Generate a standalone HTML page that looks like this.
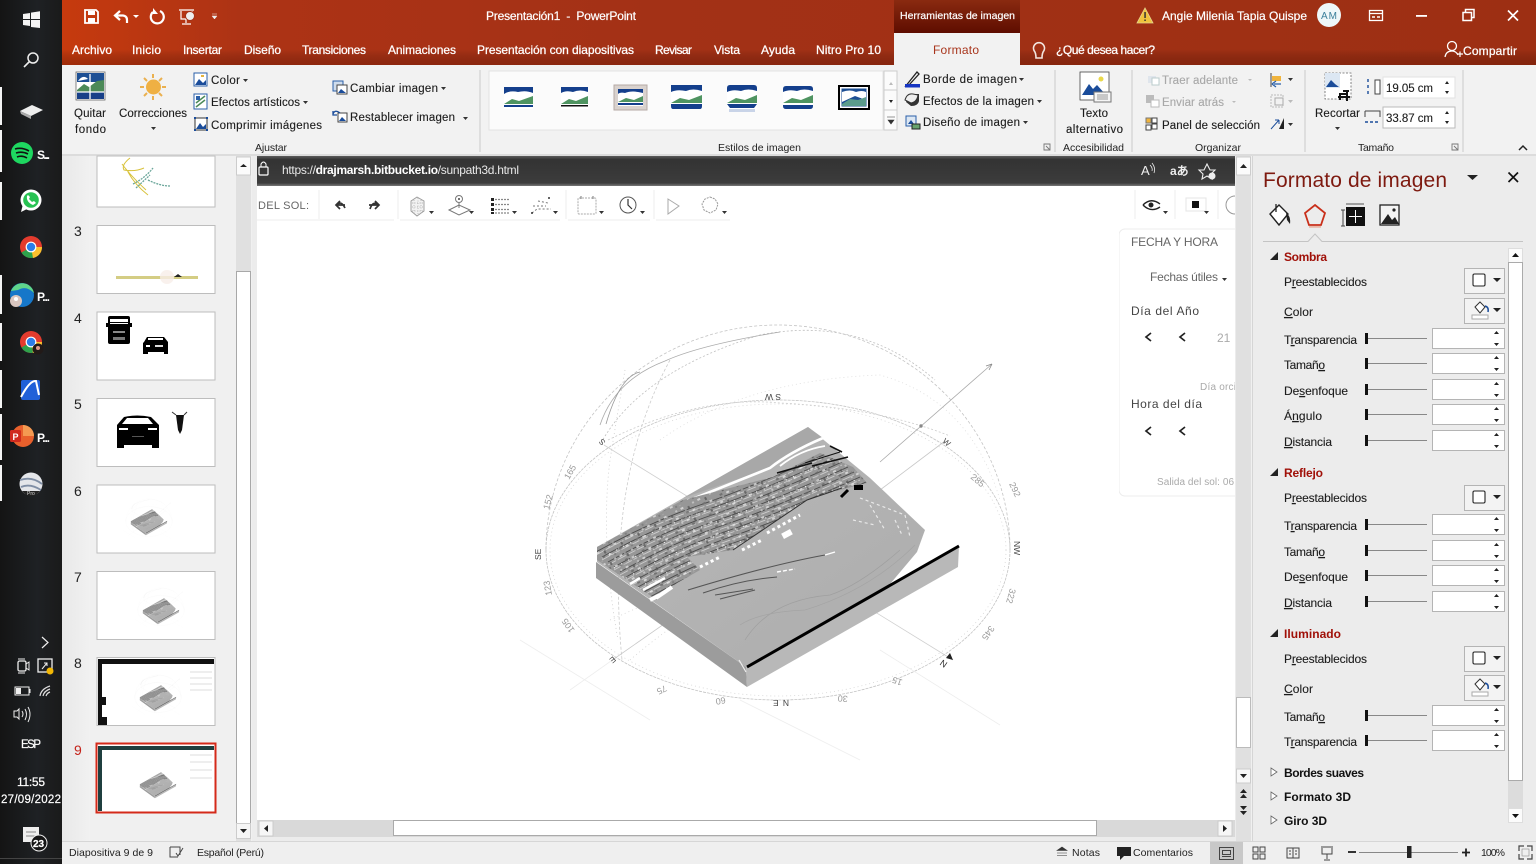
<!DOCTYPE html>
<html lang="es"><head><meta charset="utf-8"><title>Presentación1 - PowerPoint</title>
<style>
html,body{margin:0;padding:0;background:#f0f0f0;width:1536px;height:864px;overflow:hidden}
svg{display:block;position:absolute;left:0;top:0}
text{font-family:"Liberation Sans",sans-serif;font-size:12px;fill:#222;white-space:pre}
.w{fill:#fff;stroke:#fff;stroke-width:.2}.tab{fill:#fff;font-size:12px;stroke:#fff;stroke-width:.25}
.s{font-size:11.5px;fill:#1c1c1c;stroke:#1c1c1c;stroke-width:.12}
.g{font-size:10.5px;fill:#222}
.d{fill:#a8a8a8;stroke:#a8a8a8}
.n{font-size:14px;fill:#222}
.b{font-size:12px;fill:#a01008;font-weight:bold}
.bk{font-size:12px;fill:#111;font-weight:bold}
.p{font-size:12px;fill:#1c1c1c;stroke:#1c1c1c;stroke-width:.1}
.st{font-size:10.5px;fill:#222}
.t{font-size:12px;fill:#fff;font-weight:bold}
.c{font-size:9px;fill:#999}
.ln{stroke:#c9c9c9;stroke-width:1}
</style></head><body>
<svg width="1536" height="864" viewBox="0 0 1536 864" xmlns="http://www.w3.org/2000/svg">
<defs>
<linearGradient id="tb" x1="0" x2="1" y1="0" y2="0"><stop offset="0" stop-color="#c63a0e"/><stop offset=".12" stop-color="#ad3315"/><stop offset=".4" stop-color="#a33116"/><stop offset="1" stop-color="#9d2f13"/></linearGradient>
<linearGradient id="tbs" x1="0" x2="0" y1="0" y2="1"><stop offset=".75" stop-color="#000" stop-opacity="0"/><stop offset="1" stop-color="#5a1000" stop-opacity=".35"/></linearGradient>
<linearGradient id="ht" x1="0" x2="0" y1="0" y2="1"><stop offset="0" stop-color="#8a2a10"/><stop offset="1" stop-color="#5e0d00"/></linearGradient>
<linearGradient id="task" x1="0" x2="1" y1="0" y2="0"><stop offset="0" stop-color="#141414"/><stop offset=".6" stop-color="#1e2124"/><stop offset="1" stop-color="#1a1a1a"/></linearGradient>
<linearGradient id="bar" x1="0" x2="0" y1="0" y2="1"><stop offset="0" stop-color="#5c5c5c"/><stop offset=".12" stop-color="#333"/><stop offset=".9" stop-color="#3c3c3c"/><stop offset="1" stop-color="#777"/></linearGradient>
<linearGradient id="top" x1="0" x2="1" y1="0" y2="1"><stop offset="0" stop-color="#b8b8b8"/><stop offset="1" stop-color="#adadad"/></linearGradient>
<linearGradient id="shade" x1="0" x2="1" y1="0" y2="0"><stop offset="0" stop-color="#ddd"/><stop offset="1" stop-color="#f2f2f2"/></linearGradient>
<pattern id="speck" width="19" height="13" patternUnits="userSpaceOnUse" patternTransform="rotate(-28)">
<rect x="1" y="1" width="3" height="2" fill="#e4e4e4"/><rect x="8" y="3" width="2" height="3" fill="#555"/><rect x="14" y="1" width="2" height="2" fill="#cfcfcf"/><rect x="4" y="7" width="3" height="2" fill="#666"/><rect x="11" y="8" width="3" height="2" fill="#e8e8e8"/><rect x="16" y="10" width="2" height="2" fill="#777"/><rect x="1" y="11" width="2" height="1" fill="#aaa"/>
</pattern>
<clipPath id="urbclip"><polygon points="597,547 683,500 773,477 820,453 853,467 867,483 840,490 807,500 733,550 687,557 700,570 677,583 657,600 597,560"/></clipPath>
<clipPath id="slideclip"><rect x="257" y="186" width="978" height="634"/></clipPath>
<clipPath id="panelclip"><rect x="1119" y="225" width="116" height="275"/></clipPath>

<path id="stripe" d="M596 552 Q650 522 700 505 T830 452" fill="none" stroke="#4a4a4a" stroke-width=".9" stroke-dasharray="18 2"/>
<path id="stripe2" d="M596 555 Q650 525 700 508 T830 455" fill="none" stroke="#cdcdcd" stroke-width=".9" stroke-dasharray="9 2"/>
<path id="stripe3" d="M596 553 Q650 523 700 506 T830 453" fill="none" stroke="#eee" stroke-width="1.4" stroke-dasharray="1 7"/>

<g id="land">
<polygon points="596,562 746,667 747,687 596,578" fill="#9c9c9c"/>
<polygon points="746,667 959,546 958,567 747,687" fill="#b8b8b8"/>
<polygon points="597,547 808,427 870,478 925,530 917,552 885,590 746,667 597,562" fill="url(#top)"/>
<polygon points="808,427 823,438 787,457 770,468 683,498" fill="#a8a8a8"/>
<path d="M823 438 Q790 452 770 468 L690 500" fill="none" stroke="#fff" stroke-width="2.6"/>
<path d="M825 446 Q800 450 780 466" fill="none" stroke="#fff" stroke-width="1.800"/>
<polygon points="597,547 683,500 773,477 820,453 853,467 867,483 840,490 807,500 733,550 687,557 700,570 677,583 657,600 597,560" fill="#979797"/>
<g clip-path="url(#urbclip)">
<use href="#stripe"/><use href="#stripe2"/><use href="#stripe" transform="translate(6 5)"/><use href="#stripe2" transform="translate(6 5)"/><use href="#stripe3" transform="translate(6 5)"/>
<use href="#stripe" transform="translate(12 10)"/><use href="#stripe2" transform="translate(12 10)"/><use href="#stripe" transform="translate(18 15)"/><use href="#stripe2" transform="translate(18 15)"/><use href="#stripe3" transform="translate(18 15)"/>
<use href="#stripe" transform="translate(24 20)"/><use href="#stripe2" transform="translate(24 20)"/><use href="#stripe" transform="translate(30 25)"/><use href="#stripe2" transform="translate(30 25)"/><use href="#stripe3" transform="translate(30 25)"/>
<use href="#stripe" transform="translate(36 30)"/><use href="#stripe2" transform="translate(36 30)"/><use href="#stripe" transform="translate(42 35)"/><use href="#stripe2" transform="translate(42 35)"/><use href="#stripe3" transform="translate(42 35)"/>
<use href="#stripe" transform="translate(48 40)"/><use href="#stripe2" transform="translate(48 40)"/><use href="#stripe" transform="translate(54 45)"/><use href="#stripe2" transform="translate(54 45)"/>
<use href="#stripe" transform="translate(60 50)"/><use href="#stripe2" transform="translate(60 50)"/><use href="#stripe3" transform="translate(60 50)"/><use href="#stripe" transform="translate(66 55)"/><use href="#stripe" transform="translate(72 60)"/>
<rect x="590" y="440" width="290" height="170" fill="url(#speck)" opacity=".75"/>
</g>
<path d="M733 550 L807 500 L842 488" fill="none" stroke="#333" stroke-width="1"/>
<path d="M777 473 L812 463 M812 466 L848 457 M830 446 L842 452" fill="none" stroke="#111" stroke-width="1.600"/>
<path d="M805 463 L840 452" fill="none" stroke="#111" stroke-width="1"/>
<rect x="854" y="485" width="9" height="5" fill="#000"/>
<path d="M841 497 L848 490" stroke="#000" stroke-width="3"/>
<path d="M688 590 Q770 565 825 555" fill="none" stroke="#555" stroke-width="1.100"/><path d="M825 555 L835 552" stroke="#fff" stroke-width="1.400"/>
<path d="M703 593 Q740 580 777 577" fill="none" stroke="#555" stroke-width="1.100"/><path d="M777 572 L795 569" stroke="#fff" stroke-width="1.400" stroke-dasharray="4 2"/>
<path d="M715 595 L753 589 M720 599 L755 590" stroke="#555" stroke-width="1.100"/>
<path d="M700 567 L720 557 M742 550 L762 540 M767 533 L800 515" stroke="#fff" stroke-width="3" stroke-dasharray="3 3"/>
<rect x="782" y="531" width="10" height="6" fill="#fff" transform="rotate(-28 787 534)"/>
<path d="M656 598 L672 587 M650 600 L660 595" stroke="#fff" stroke-width="4"/><path d="M643 590 L665 578 M630 584 L640 578" stroke="#fff" stroke-width="2.500"/>
<path d="M860 498 L905 515 M905 515 L910 537 M853 520 L875 525 M870 505 L885 530 M895 520 L902 535" stroke="#e8e8e8" stroke-width="1.200" stroke-dasharray="3 3" fill="none"/>
<path d="M745 640 Q770 600 830 595 Q860 585 900 550" fill="none" stroke="#9f9f9f" stroke-width=".7"/>
<path d="M740 625 Q760 612 805 610 Q870 590 915 545" fill="none" stroke="#a4a4a4" stroke-width=".7"/>
<path d="M739 660 L746 672" stroke="#eee" stroke-width="1.200"/>
<path d="M747 667 L959 546" stroke="#000" stroke-width="3"/>
</g>

<g id="dome" fill="none" stroke="#c4c4c4" stroke-width=".8">
<ellipse cx="778" cy="550" rx="232" ry="150" stroke-dasharray="3 1"/>
<path d="M546 550 A232 225 0 0 1 1010 550" stroke-dasharray="3 2"/>
<ellipse cx="778" cy="550" rx="228" ry="146" stroke="#d5d5d5" stroke-dasharray="1 3"/>
<path d="M601 443 Q640 372 760 335 Q860 315 935 380" stroke="#c0c0c0" stroke-dasharray="2 2"/>
<path d="M608 440 Q700 395 780 403 Q880 408 950 436" stroke="#ccc" stroke-dasharray="2 2"/>
<path d="M600 425 Q615 380 665 361 Q700 345 780 332" stroke="#aaa"/>
<path d="M606 424 Q620 376 640 372" stroke="#999"/>
<path d="M625 370 Q618 410 610 460 Q600 540 618 640" stroke="#ccc" stroke-dasharray="1 3"/>
<path d="M670 360 Q605 480 622 660" stroke="#ccc" stroke-dasharray="3 2"/>
<path d="M604 445 L953 660" stroke="#d0d0d0"/>
<path d="M611 661 L720 585 M880 490 L945 441" stroke="#c8c8c8"/>
<path d="M880 462 L992 364" stroke="#a8a8a8"/>
<path d="M992 364 L986 366 M992 364 L989 370" stroke="#888"/>
<circle cx="921" cy="426" r="1.700" fill="#888" stroke="none"/>
<path d="M660 440 Q745 380 880 375 Q970 400 1000 500" stroke="#ddd" stroke-dasharray="1 3"/>
<path d="M610 620 Q680 590 700 570 M630 660 Q700 600 720 610" stroke="#d5d5d5" stroke-dasharray="1 3"/>
<path d="M520 640 L650 720 M880 650 L1000 725 M611 661 L570 690 M740 700 L860 760" stroke="#eee"/>
</g>
</defs>

<!-- desktop taskbar -->
<rect x="0" y="0" width="62" height="864" fill="url(#task)"/>
<g fill="#f4f4f4">
<rect x="0" y="87" width="2" height="38"/><rect x="0" y="130" width="2" height="42"/><rect x="0" y="182" width="2" height="38"/><rect x="0" y="275" width="2" height="39"/><rect x="0" y="323" width="2" height="38"/><rect x="0" y="370" width="2" height="38"/><rect x="0" y="414" width="2" height="46"/><rect x="0" y="465" width="2" height="36"/>
<path d="M23 14 L30 13 V19 H23 Z M31 12.600 L40 11.300 V19 H31 Z M23 20 H30 V26 L23 25 Z M31 20 H40 V28 L31 27 Z"/>
</g>
<circle cx="33" cy="58" r="5" fill="none" stroke="#eee" stroke-width="1.500"/><path d="M29 62 L24 67" stroke="#eee" stroke-width="1.600"/>
<path d="M20 111 L32 105 L43 110 L31 116 Z" fill="#eee"/><path d="M20 111 L31 116 V119 L21 114Z" fill="#aaa"/>
<circle cx="22" cy="153" r="11" fill="#1ed760"/><path d="M15 149 Q22 147 29 151 M16 153 Q22 151 28 154 M17 157 Q22 155 27 158" stroke="#111" stroke-width="1.600" fill="none"/>
<text x="37" y="159" class="t" textLength="13">S...</text>
<circle cx="31" cy="200" r="10.500" fill="#fff"/><path d="M21 212 L23 204 L27 209Z" fill="#fff"/><circle cx="31" cy="200" r="7.800" fill="#28c253"/><path d="M27 196 Q26 202 33 205 L36 203 L34 201 L32 202 Q30 200 29 199 L30 197 L28 195Z" fill="#fff"/>
<g id="chrome"><circle cx="31" cy="247" r="11" fill="#e33b2e"/><path d="M31 247 L21.500 252.500 A11 11 0 0 0 31 258 A11 11 0 0 0 40 253Z" fill="#2ea24c"/><path d="M31 247 L42 247 A11 11 0 0 1 33 258 Z" fill="#fbc02d"/><circle cx="31" cy="247" r="5.400" fill="#fff"/><circle cx="31" cy="247" r="4.200" fill="#2b7de9"/></g>
<circle cx="22" cy="295" r="12" fill="#1677c9"/><path d="M11 291 A12 12 0 0 1 34 293 Q26 285 18 290Z" fill="#5fd58a"/><circle cx="16" cy="301" r="6" fill="#d9c6c0"/><circle cx="16" cy="299" r="2" fill="#fff"/>
<text x="37" y="301" class="t" textLength="13">P...</text>
<use href="#chrome" y="95"/><circle cx="38" cy="349" r="5.500" fill="#221a18"/><circle cx="38" cy="348" r="2" fill="#d98"/>
<rect x="21" y="380" width="19" height="20" rx="2" fill="#2060d8"/><path d="M21 397 Q30 380 36 381 L39 395" fill="none" stroke="#fff" stroke-width="2"/>
<circle cx="23" cy="436" r="11" fill="#e8602c"/><path d="M23 425 A11 11 0 0 1 34 436 H23Z" fill="#f49a52"/><rect x="10" y="430" width="11" height="12" rx="1.500" fill="#d02a1e"/><text x="12.500" y="440" style="font-size:9px;font-weight:bold;fill:#fff">P</text>
<text x="37" y="442" class="t" textLength="13">P...</text>
<circle cx="31" cy="484" r="11.500" fill="#e4e6ea"/><path d="M20 480 Q32 476 42 484 M21 487 Q30 483 41 490" stroke="#7f8ea5" stroke-width="1.800" fill="none"/><path d="M22 491 H40 Q36 496 31 496 Q26 496 22 491Z" fill="#232323"/><text x="27" y="495" style="font-size:5px;fill:#ddd">Pro</text>
<path d="M42 637 L48 642.500 L42 648" fill="none" stroke="#eee" stroke-width="1.200"/>
<rect x="18" y="661" width="8" height="10" rx="1.500" fill="none" stroke="#eee" stroke-width="1.300"/><path d="M26 664 L29 662 V670 L26 668 M18 659 H25 M18 673 H25" fill="none" stroke="#eee"/>
<rect x="38" y="659" width="14" height="13" fill="none" stroke="#eee" stroke-width="1.300"/><path d="M42 669 L47 663 M44 663 H47 V666" fill="none" stroke="#eee"/><circle cx="50" cy="671" r="3.500" fill="#f2b705"/>
<rect x="15" y="687" width="14" height="8" fill="none" stroke="#eee"/><rect x="16" y="688" width="5" height="6" fill="#eee"/><rect x="29" y="689" width="1.500" height="4" fill="#eee"/>
<path d="M40 696 Q41 689 50 686 M43 696 Q44 691 50 689 M46 696 Q47 693 50 692" fill="none" stroke="#ddd" stroke-width="1.200"/>
<path d="M14 711 H17 L19 709 V719 L17 717 H14Z M22 711 Q24 714 22 717 M25 709 Q28 714 25 720 M28 707 Q32 714 28 722" fill="none" stroke="#eee"/>
<text x="21" y="748" class="w" style="font-size:11.500px" textLength="20">ESP</text>
<text x="17" y="786" class="w" style="font-size:12px" textLength="28">11:55</text>
<text x="1" y="803" class="w" style="font-size:11.500px" textLength="60">27/09/2022</text>
<rect x="23" y="827" width="16" height="15" fill="#eee"/><path d="M26 832 H36 M26 836 H36" stroke="#888"/><circle cx="39" cy="843" r="8" fill="#151515" stroke="#eee"/><text x="33" y="847" class="w" style="font-size:10px;font-weight:bold">23</text>
<rect x="0" y="858" width="62" height="1" fill="#444"/>

<!-- title bar -->
<rect x="62" y="0" width="1474" height="66" fill="url(#tb)"/>
<rect x="62" y="0" width="1474" height="66" fill="url(#tbs)"/>
<rect x="894" y="0" width="126" height="33" fill="url(#ht)"/>
<path d="M85 10 H96 L98 12 V23 H85 Z" fill="none" stroke="#fff" stroke-width="1.800"/><rect x="88" y="11" width="7" height="4" fill="#fff"/><rect x="88" y="18" width="7" height="5" fill="#fff"/>
<path d="M120 11 L115 15.500 L120 20 M116 15.500 H123 Q127 16 127 20 V23" fill="none" stroke="#fff" stroke-width="2.200"/><path d="M133 15 H139 L136 18Z" fill="#fff"/>
<path d="M160 11 A6.500 6.500 0 1 1 153 12" fill="none" stroke="#fff" stroke-width="2.200"/><path d="M153 8 V14 H158Z" fill="#fff"/>
<path d="M179 10 H194 M181 11 V19 H192 V11 M186 19 V23 M182 24 H191" fill="none" stroke="#fff" stroke-width="1.200"/><circle cx="190" cy="16" r="4.500" fill="#eee" stroke="#a33116"/>
<path d="M212 14 H217 M212 16 H217 L214.500 19Z" fill="#eee" stroke="#eee" stroke-width=".5"/>
<text x="486" y="20" class="w" textLength="150">Presentación1  -  PowerPoint</text>
<text x="900" y="19" class="w" style="font-size:10.500px" textLength="115">Herramientas de imagen</text>
<path d="M1145 8 L1153 23 H1137 Z" fill="#f0c33c" stroke="#e6d48c" stroke-width=".8"/><rect x="1144.300" y="12" width="1.500" height="6" fill="#333"/><rect x="1144.300" y="19.500" width="1.500" height="1.500" fill="#333"/>
<text x="1162" y="20" class="w" textLength="145">Angie Milenia Tapia Quispe</text>
<circle cx="1329" cy="15" r="12" fill="#eef7f9"/><text x="1321" y="19" style="font-size:10px;fill:#3a7f9a" textLength="16">AM</text>
<path d="M1369.500 10.500 H1382.500 V20.500 H1369.500Z M1369.500 13.500 H1382.500" fill="none" stroke="#fff" stroke-width="1.300"/><path d="M1372 17 H1375 M1377 17 H1380" stroke="#fff" stroke-width="1.500"/>
<rect x="1416" y="15" width="11" height="1.800" fill="#fff"/>
<path d="M1463 12.500 H1471.500 V20.500 H1463Z M1465.500 12 V9.500 H1474 V17.500 H1471.500" fill="none" stroke="#fff" stroke-width="1.500"/>
<path d="M1508 10.500 L1518 20.500 M1518 10.500 L1508 20.500" stroke="#fff" stroke-width="1.700"/>
<g>
<text x="72" y="54" class="tab" textLength="40">Archivo</text>
<text x="132" y="54" class="tab" textLength="29">Inicio</text>
<text x="183" y="54" class="tab" textLength="39">Insertar</text>
<text x="244" y="54" class="tab" textLength="37">Diseño</text>
<text x="302" y="54" class="tab" textLength="64">Transiciones</text>
<text x="388" y="54" class="tab" textLength="68">Animaciones</text>
<text x="477" y="54" class="tab" textLength="157">Presentación con diapositivas</text>
<text x="655" y="54" class="tab" textLength="37">Revisar</text>
<text x="714" y="54" class="tab" textLength="26">Vista</text>
<text x="761" y="54" class="tab" textLength="34">Ayuda</text>
<text x="816" y="54" class="tab" textLength="65">Nitro Pro 10</text>
</g>
<path d="M1036 58 Q1036 53 1034 50.500 A5.500 5.500 0 1 1 1044 50.500 Q1042 53 1042 58Z" fill="none" stroke="#f3e6df" stroke-width="1.600"/>
<text x="1056" y="54" class="tab" textLength="99">¿Qué desea hacer?</text>
<circle cx="1452" cy="46" r="4.500" fill="none" stroke="#fff" stroke-width="1.300"/><path d="M1445 57 Q1446 51 1452 51 Q1456 51 1458 55 M1457 54 H1463 M1460 51.500 V57" fill="none" stroke="#fff" stroke-width="1.200"/>
<text x="1463" y="55" class="tab" textLength="54">Compartir</text>

<!-- ribbon -->
<rect x="62" y="65" width="1474" height="91" fill="#f2f2f2"/>
<rect x="894" y="33" width="126" height="33" fill="#f2f2f2"/>
<text x="933" y="54" style="fill:#a8351c" textLength="46">Formato</text>
<rect x="62" y="154" width="1474" height="2" fill="#dcdcdc"/>

<!-- Ajustar -->
<g id="pic"><rect x="76" y="72" width="29" height="28" fill="#fff" stroke="#666" stroke-width=".8"/><rect x="77" y="73" width="27" height="9" fill="#1d4f94"/><path d="M77 90 L84 84 L89 87 L97 81 L104 80 V92 H77 Z" fill="#4c8a58"/><rect x="77" y="92" width="27" height="7" fill="#173f88"/><path d="M90 74 V99 M77 92 H104" stroke="#fff" stroke-width="1.300"/><path d="M78 81 Q83 74 88 79" fill="#fff"/></g>
<text x="74" y="117" class="s" textLength="32">Quitar</text><text x="75" y="133" class="s" textLength="31">fondo</text>
<g stroke="#eab04f" stroke-width="2"><path d="M153 74 V78 M153 96 V100 M140 87 H144 M162 87 H166 M144 78 L147 81 M159 93 L162 96 M162 78 L159 81 M147 93 L144 96"/></g><circle cx="153.500" cy="87" r="7.500" fill="#efb043"/>
<text x="119" y="117" class="s" textLength="68">Correcciones</text><path d="M151 127 H156 L153.500 130Z" fill="#333"/>
<g><rect x="194" y="73" width="13" height="13" fill="#fff" stroke="#2a5fa8"/><path d="M195 85 L199 79 L203 83 L206 80 V85Z" fill="#1a4c9a"/><rect x="201" y="75" width="3" height="2" fill="#e5b33c"/></g>
<text x="211" y="84" class="s" textLength="29">Color</text><path d="M243 79 H248 L245.500 82Z" fill="#333"/>
<rect x="194" y="94" width="13" height="15" fill="#fff" stroke="#2a5fa8"/><path d="M196 103 L205 96 M196 107 L205 100" stroke="#4c8a58" stroke-width="1.500"/><path d="M196 96 H200 V100 H196Z" fill="#2a5fa8"/>
<text x="211" y="106" class="s" textLength="89">Efectos artísticos</text><path d="M303 101 H308 L305.500 104Z" fill="#333"/>
<rect x="195" y="118" width="12" height="12" fill="#fff" stroke="#333"/><path d="M196 129 L200 123 L203 127 L206 124 V129Z" fill="#1a4c9a"/><rect x="194" y="117" width="2" height="2" fill="#1a4c9a"/><rect x="206" y="117" width="2" height="2" fill="#1a4c9a"/><rect x="194" y="129" width="2" height="2" fill="#1a4c9a"/><rect x="206" y="129" width="2" height="2" fill="#1a4c9a"/>
<text x="211" y="129" class="s" textLength="111">Comprimir imágenes</text>
<rect x="333" y="81" width="10" height="10" fill="#cfdcec" stroke="#2a5fa8"/><rect x="337" y="85" width="10" height="9" fill="#fff" stroke="#444"/><path d="M338 93 L341 89 L346 93Z" fill="#1a4c9a"/>
<text x="350" y="92" class="s" textLength="88">Cambiar imagen</text><path d="M441 87 H446 L443.500 90Z" fill="#333"/>
<rect x="338" y="113" width="9" height="9" fill="#fff" stroke="#444"/><path d="M339 121 L342 117 L346 121Z" fill="#1a4c9a"/><path d="M340 113 Q335 109 333 114 M333 111 V115 H337" fill="none" stroke="#1a4c9a" stroke-width="1.300"/>
<text x="350" y="121" class="s" textLength="105">Restablecer imagen</text><path d="M463 117 H468 L465.500 120Z" fill="#333"/>
<text x="255" y="151" class="g" textLength="32">Ajustar</text>
<path class="ln" d="M480 70 V152"/>

<!-- gallery -->
<rect x="489" y="71" width="394" height="59" fill="#fbfbfb" stroke="#e3e3e3"/>
<g id="th"><rect x="504" y="87" width="29" height="22" fill="#fff"/><path d="M504 87 H533 V93 Q526 90 518 92 Q510 90 504 94Z" fill="#143f8c"/><path d="M504 104 L512 99 L519 101 L533 96 V104Z" fill="#4f9461"/><rect x="504" y="105" width="29" height="2" fill="#143f8c"/></g>
<g id="th2"><rect x="561" y="87" width="27" height="22" fill="#fff"/><path d="M561 87 H588 V92 Q580 89 573 92 Q566 90 561 93Z" fill="#143f8c"/><path d="M561 104 L569 99 L576 101 L588 96 V104Z" fill="#4f9461"/><rect x="561" y="105" width="27" height="1.500" fill="#111"/></g>
<rect x="614" y="85" width="33" height="25" fill="#d9d2ce" stroke="#b5aaa4"/><rect x="618" y="89" width="25" height="17" fill="#fff"/><path d="M618 89 H643 V93 Q632 90 625 93 Q620 92 618 94Z" fill="#143f8c"/><path d="M618 102 L626 98 L634 100 L643 96 V102Z" fill="#4f9461"/><rect x="618" y="103" width="25" height="2" fill="#143f8c"/>
<g><rect x="671" y="85" width="31" height="24" rx="2" fill="#fff"/><path d="M671 85 H702 V91 Q693 88 686 91 Q677 89 671 92Z" fill="#143f8c"/><path d="M671 103 L680 98 L689 100 L702 95 V103Z" fill="#4f9461"/><path d="M671 104 H702 V106 Q702 109 700 109 H673 Q671 109 671 106Z" fill="#143f8c"/></g>
<g><rect x="727" y="85" width="30" height="25" rx="2" fill="#fff"/><path d="M727 88 Q727 85 730 85 H754 Q757 85 757 88 V91 Q748 88 741 91 Q733 89 727 92Z" fill="#143f8c"/><path d="M727 103 L736 98 L745 100 L757 95 V103Z" fill="#4f9461"/><path d="M727 104 H757 L754 108 H730Z" fill="#143f8c"/><rect x="729" y="109" width="26" height="3" fill="#c9d4e8"/></g>
<g><rect x="783" y="86" width="30" height="23" rx="2" fill="#fff"/><path d="M783 89 Q783 86 786 86 H810 Q813 86 813 89 V91 Q804 88 797 91 Q789 89 783 92Z" fill="#143f8c"/><path d="M783 103 L792 98 L801 100 L813 95 V103Z" fill="#4f9461"/><path d="M783 105 H813 V106 Q813 109 810 109 H786 Q783 109 783 106Z" fill="#143f8c"/></g>
<g><rect x="838" y="85" width="32" height="25" fill="#000"/><rect x="840" y="87" width="28" height="21" fill="#fff"/><rect x="841.500" y="88.500" width="25" height="18" fill="#1d4f94"/><path d="M842 92 Q850 89 856 92 Q862 90 866 92 V100 L855 96 L842 102Z" fill="#fff"/><path d="M842 104 L850 99 L858 100 L866 97 V106 H842Z" fill="#5b9c8c"/></g>
<rect x="884" y="71" width="13" height="59" fill="#fbfbfb" stroke="#ccc"/><path d="M884 90 H897 M884 110 H897" stroke="#ccc"/>
<path d="M889 85 L893 85 L891 82Z" fill="#bbb"/><path d="M889 100 H893 L891 103Z" fill="#222"/><path d="M887 117 H895 M888 120 H894 L891 124Z" fill="#333" stroke="#333" stroke-width=".6"/>
<path d="M905 87 L917 72 L919 74 L909 85" fill="none" stroke="#222" stroke-width="1.300"/><rect x="905" y="84" width="15" height="3.500" fill="#1635c2"/>
<text x="923" y="83" class="s" textLength="94">Borde de imagen</text><path d="M1019 78 H1024 L1021.500 81Z" fill="#333"/>
<path d="M906 102 Q908 94 914 94 H919 V101 Q918 106 911 106Z" fill="#333"/><path d="M905 100 Q907 93 913 94 L918 95 Q917 102 911 103Z" fill="#eee" stroke="#333"/>
<text x="923" y="105" class="s" textLength="111">Efectos de la imagen</text><path d="M1037 100 H1042 L1039.500 103Z" fill="#333"/>
<rect x="906" y="116" width="10" height="10" fill="#dce7f3" stroke="#2a5fa8"/><path d="M908 124 L911 120 L914 124Z" fill="#1a4c9a"/><rect x="912" y="124" width="8" height="5" fill="#67a36d" stroke="#222"/>
<text x="923" y="126" class="s" textLength="97">Diseño de imagen</text><path d="M1023 121 H1028 L1025.500 124Z" fill="#333"/>
<text x="718" y="151" class="g" textLength="83">Estilos de imagen</text>
<path d="M1044 144 H1050 V150 H1044Z M1046 146 L1050 150" fill="none" stroke="#777" stroke-width=".9"/>
<path class="ln" d="M1055 70 V152"/>

<!-- alt text -->
<rect x="1080" y="72" width="29" height="28" fill="#fff" stroke="#444" stroke-width=".8"/><circle cx="1101" cy="79" r="2.500" fill="#e9d84a"/><path d="M1082 95 L1089 84 L1093 89 L1097 85 L1106 95Z" fill="#1a4c9a"/><rect x="1094" y="92" width="17" height="10" fill="#f6f6f6" stroke="#777"/><path d="M1097 95 H1108 M1097 97 H1108 M1097 99 H1108" stroke="#999"/>
<text x="1080" y="117" class="s" textLength="28">Texto</text><text x="1066" y="133" class="s" textLength="57">alternativo</text>
<text x="1063" y="151" class="g" textLength="61">Accesibilidad</text>
<path class="ln" d="M1132 70 V152"/>

<!-- arrange -->
<rect x="1148" y="76" width="8" height="7" fill="#dfe5ec"/><rect x="1152" y="78" width="7" height="7" fill="#fff" stroke="#bcc"/>
<text x="1162" y="84" class="s d" textLength="76">Traer adelante</text><path d="M1248 79 H1252 L1250 81Z" fill="#bbb"/>
<rect x="1146" y="95" width="8" height="8" fill="#bbb"/><rect x="1151" y="100" width="8" height="7" fill="#fff" stroke="#bbb"/>
<text x="1162" y="106" class="s d" textLength="62">Enviar atrás</text><path d="M1232 101 H1236 L1234 103Z" fill="#bbb"/>
<rect x="1146" y="118" width="5" height="5" fill="#f0b43d" stroke="#777"/><rect x="1146" y="125" width="5" height="5" fill="#fff" stroke="#444"/><rect x="1152" y="118" width="5" height="5" fill="#fff" stroke="#444"/><rect x="1152" y="124" width="5" height="5" fill="#fff" stroke="#444"/>
<text x="1162" y="129" class="s" textLength="98">Panel de selección</text>
<path d="M1271 73 V87" stroke="#444"/><rect x="1272" y="76" width="9" height="5" fill="#f0b43d"/><path d="M1274 84 H1281 M1272 84 L1276 81 M1272 84 L1276 87" stroke="#2a5fa8" stroke-width="1.200"/><path d="M1288 78 H1293 L1290.500 81Z" fill="#333"/>
<rect x="1271" y="95" width="12" height="12" fill="none" stroke="#bbb" stroke-dasharray="2 1"/><rect x="1275" y="98" width="8" height="7" fill="none" stroke="#aaa"/><path d="M1288 100 H1293 L1290.500 103Z" fill="#bbb"/>
<path d="M1271 129 L1279 120 M1279 120 H1275 M1279 120 V124" stroke="#1a4c9a" fill="none"/><path d="M1279 129 L1284 118 L1284 129Z" fill="#222"/><path d="M1288 123 H1293 L1290.500 126Z" fill="#333"/>
<text x="1195" y="151" class="g" textLength="46">Organizar</text>
<path class="ln" d="M1305 70 V152"/>

<!-- size -->
<rect x="1325" y="73" width="26" height="26" fill="#fff" stroke="#666" stroke-dasharray="2 1.500" stroke-width=".8"/><rect x="1325" y="73" width="15" height="15" fill="#dce7f3"/><path d="M1326 87 L1331 80 L1335 84 L1339 87Z" fill="#1a4c9a"/><path d="M1343 91 H1349 M1347 90 V101 M1347 94 H1340 V100 M1350 97 H1338" stroke="#111" stroke-width="2" fill="none"/>
<text x="1315" y="117" class="s" textLength="45">Recortar</text><path d="M1335 127 H1340 L1337.500 130Z" fill="#333"/>
<rect x="1383" y="77" width="72" height="21" fill="#fff" stroke="#e2e2e2"/>
<rect x="1375" y="80" width="5" height="14" fill="#fff" stroke="#444"/><path d="M1368 79 V94" stroke="#1a4c9a" stroke-dasharray="3 3" stroke-width="1.400"/>
<text x="1386" y="92" class="s" textLength="47">19.05 cm</text><path d="M1445 84 H1449 L1447 81Z M1445 91 H1449 L1447 94Z" fill="#222"/>
<rect x="1383" y="107" width="72" height="21" fill="#fff" stroke="#bbb"/>
<path d="M1365 111 H1380 V117 M1365 111 V117" fill="none" stroke="#444"/><path d="M1365 122 H1380" stroke="#1a4c9a" stroke-dasharray="3 2" stroke-width="1.400"/>
<text x="1386" y="122" class="s" textLength="47">33.87 cm</text><path d="M1445 114 H1449 L1447 111Z M1445 121 H1449 L1447 124Z" fill="#222"/>
<text x="1358" y="151" class="g" textLength="36">Tamaño</text>
<path d="M1452 144 H1458 V150 H1452Z M1454 146 L1458 150" fill="none" stroke="#777" stroke-width=".9"/>
<path class="ln" d="M1463 70 V152"/>
<path d="M1519 150 L1523 146 L1527 150" fill="none" stroke="#222" stroke-width="1.500"/>

<!-- thumbnail pane -->
<rect x="62" y="156" width="190" height="686" fill="#f0f0f0"/>
<rect x="62" y="156" width="28" height="686" fill="url(#shade)" opacity=".4"/>
<g fill="#fff" stroke="#bdbdbd">
<rect x="97" y="156" width="118" height="51"/><rect x="97" y="225.500" width="118" height="68"/><rect x="97" y="312" width="118" height="68"/><rect x="97" y="398.500" width="118" height="68"/><rect x="97" y="485" width="118" height="68"/><rect x="97" y="571.500" width="118" height="68"/><rect x="97" y="657.500" width="118" height="68"/>
</g>
<rect x="96.500" y="743.500" width="119" height="69" fill="#fff" stroke="#d42a1a" stroke-width="2"/>
<g fill="#222">
<text x="74" y="236" class="n">3</text><text x="74" y="323" class="n">4</text><text x="74" y="409" class="n">5</text><text x="74" y="496" class="n">6</text><text x="74" y="582" class="n">7</text><text x="74" y="668" class="n">8</text><text x="74" y="755" class="n" style="fill:#c4231a">9</text>
</g>
<!-- slide 2 map -->
<path d="M130 158 Q121 165 124 170 Q135 172 144 168 M122 164 Q130 175 146 190 M128 172 Q135 185 148 195" fill="none" stroke="#d8c23c" stroke-width="1"/>
<path d="M133 184 Q145 178 153 168 M148 180 Q160 186 170 186 M136 188 L150 175" fill="none" stroke="#6aa69a" stroke-width="1.300" stroke-dasharray="2 1"/>
<!-- slide 3 -->
<rect x="116" y="276" width="82" height="3" fill="#d4cd84"/><circle cx="167" cy="277" r="7" fill="#f7eee8" opacity=".8"/><path d="M174 277 L178 274 L182 277Z" fill="#222"/>
<!-- slide 4 -->
<rect x="108" y="316" width="22" height="28" rx="2" fill="#000"/><rect x="110" y="319" width="18" height="3" fill="#fff"/><rect x="110" y="323" width="18" height="1" fill="#fff"/><rect x="113" y="331" width="12" height="2" fill="#888"/><rect x="113" y="337" width="12" height="3" fill="#777"/><rect x="106" y="323" width="2" height="4" fill="#000"/><rect x="130" y="323" width="2" height="4" fill="#000"/>
<path d="M144 342 L147 337 H164 L168 342 V354 H164 V352 H148 V354 H143 V343Z" fill="#000"/><rect x="148" y="338" width="15" height="2" fill="#fff"/><rect x="146" y="345" width="4" height="2" fill="#fff"/><rect x="155" y="345" width="8" height="2" fill="#ddd"/>
<!-- slide 5 -->
<path d="M117 425 L124 417 Q137 414 151 417 L159 425 V448 H152 V445 H124 V448 H117Z" fill="#000"/><path d="M122 424 L127 418 H148 L153 424Z" fill="#fff"/><rect x="119" y="428" width="9" height="2" fill="#fff"/><rect x="148" y="428" width="9" height="2" fill="#fff"/><rect x="132" y="436" width="12" height="1" fill="#555"/>
<path d="M176 415 H184 L182 430 L180 434 L178 430Z" fill="#111"/><path d="M172 412 L176 415 M187 412 L184 415" stroke="#333"/>
<!-- slide previews -->
<g transform="translate(71.200 466.500) scale(.1)"><use href="#dome" opacity=".5"/><use href="#land"/></g>
<g transform="translate(83.200 555.500) scale(.1)"><use href="#dome" opacity=".5"/><use href="#land"/></g>
<rect x="98" y="659" width="116" height="5" fill="#111"/><rect x="98" y="659" width="4" height="66" fill="#111"/><rect x="102" y="697" width="4" height="8" fill="#111"/><rect x="102" y="717" width="5" height="8" fill="#111"/>
<path d="M190 672 H212 M190 678 H212 M190 684 H212 M190 690 H212" stroke="#eee" stroke-width="2"/>
<g transform="translate(80.200 642.500) scale(.1)"><use href="#dome" opacity=".7"/><use href="#land"/></g>
<rect x="98" y="746" width="116" height="4" fill="#1f3f3f"/><rect x="98" y="746" width="4" height="65" fill="#1f3f3f"/>
<path d="M190 755 H212 M190 762 H212 M190 770 H212 M190 778 H212" stroke="#eee" stroke-width="2"/>
<g transform="translate(80.200 729.500) scale(.1)"><use href="#land"/></g>
<!-- thumb scroll -->
<rect x="236" y="156" width="15" height="686" fill="#e0e0e0"/>
<rect x="236.500" y="157" width="14" height="18" fill="#fbfbfb" stroke="#ccc"/><path d="M240 167 H247 L243.500 164Z" fill="#222"/>
<rect x="236.500" y="271.500" width="14" height="552" fill="#fff" stroke="#a8a8a8"/>
<rect x="236.500" y="823.500" width="14" height="15" fill="#f6f6f6" stroke="#ccc"/><path d="M240 829 H247 L243.500 833Z" fill="#222"/>

<!-- slide area -->
<rect x="252" y="156" width="984" height="686" fill="#ececec"/>
<rect x="257" y="156" width="978" height="664" fill="#fff"/>
<rect x="257" y="156" width="978" height="30" fill="url(#bar)"/>
<rect x="259" y="167" width="9" height="8" rx="1" fill="none" stroke="#fff" stroke-width="1.200"/><path d="M261 167 V164 Q263.500 160 266 164 V167" fill="none" stroke="#fff"/>
<text x="282" y="174" style="fill:#e8e8e8" textLength="237">https://<tspan font-weight="bold" fill="#fff">drajmarsh.bitbucket.io</tspan>/sunpath3d.html</text>
<text x="1141" y="175" style="font-size:13px;fill:#eee">A</text><path d="M1150 165 Q1153 168 1152 171 M1152 163 Q1156 168 1154 173" stroke="#eee" fill="none" stroke-width=".8"/>
<text x="1170" y="175" style="font-size:12px;font-weight:bold;fill:#eee">aあ</text>
<path d="M1207 164 L1210 170 H1215 L1211 174 L1212 179 L1207 176 L1202 179 L1203 174 L1199 170 H1204Z" fill="none" stroke="#eee" stroke-width="1.100"/><circle cx="1212" cy="176" r="3.500" fill="#eee"/>

<!-- sunpath app toolbar -->
<text x="258" y="209" style="font-size:11px;fill:#666" textLength="51">DEL SOL:</text>
<g stroke="#ececec"><path d="M319 190 V219 M398 190 V219 M566 190 V219 M654 190 V219 M1135 190 V219 M1175 190 V219 M1218 190 V219"/><path d="M257 220 H394 M400 220 H560 M568 220 H650 M656 220 H730"/></g>
<path d="M345 205 H337 M340 201 L336 205 L340 209 M337 205 Q341 200 345 208" fill="none" stroke="#333" stroke-width="1.700"/>
<path d="M369 205 H378 M375 201 L379 205 L375 209 M379 205 Q373 200 370 209" fill="none" stroke="#333" stroke-width="1.700"/>
<path d="M411 201 L417 197 L424 201 V211 L417 216 L411 211Z" fill="#f2f2f2" stroke="#999" stroke-width=".9"/><path d="M412 203 H423 M412 207 H423 M412 211 H423 M414 200 V214 M418 198 V215 M421 200 V214" stroke="#aaa" stroke-dasharray="1 1.500" stroke-width=".7"/>
<circle cx="459" cy="199" r="3.500" fill="none" stroke="#777"/><circle cx="459" cy="199" r="1" fill="#444"/><path d="M459 203 V208 M449 210 L459 205 L470 210 L459 215Z" fill="none" stroke="#777"/>
<g fill="#222"><rect x="491" y="198" width="3" height="3"/><rect x="491" y="203" width="3" height="3"/><rect x="491" y="208" width="3" height="3"/><rect x="491" y="212" width="3" height="2"/></g><path d="M495 199.500 H510 M495 204.500 H510 M495 209.500 H510 M495 213 H510" stroke="#888" stroke-width="1.200" stroke-dasharray="2 1"/>
<path d="M532 213 L537 209 H551 M533 206 H546 M538 201 L548 203" stroke="#777" stroke-dasharray="2 2" fill="none"/><circle cx="549" cy="198" r="1" fill="#333"/><circle cx="532" cy="213" r="1" fill="#333"/>
<rect x="578" y="198" width="18" height="16" rx="1" fill="none" stroke="#aaa" stroke-dasharray="2 1"/><path d="M581 196 V199 M593 196 V199" stroke="#777"/>
<circle cx="628" cy="205" r="8" fill="none" stroke="#555"/><path d="M628 199 V205 L632 209" stroke="#333" fill="none" stroke-width="1.200"/>
<path d="M668 199 L679 206 L668 214Z" fill="none" stroke="#aaa"/>
<path d="M710 197 L715 199 L718 204 L716 210 L710 213 L704 210 L702 204 L705 199Z" fill="none" stroke="#999" stroke-dasharray="2 1"/>
<g fill="#333"><path d="M429 211 H434 L431.500 214Z M469 211 H474 L471.500 214Z M512 211 H517 L514.500 214Z M553 211 H558 L555.500 214Z M599 211 H604 L601.500 214Z M640 211 H645 L642.500 214Z M722 211 H727 L724.500 214Z"/></g>
<path d="M1143 205 Q1151 197 1160 204 M1143 205 Q1151 213 1160 207" fill="none" stroke="#222" stroke-width="1.400"/><circle cx="1151" cy="205" r="2.500" fill="#222"/><path d="M1163 211 H1168 L1165.500 214Z" fill="#333"/>
<rect x="1186" y="198" width="20" height="13" fill="#fff" stroke="#e5e5e5"/><rect x="1192" y="201" width="7" height="7" fill="#111"/><path d="M1204 211 H1209 L1206.500 214Z" fill="#333"/>
<path d="M1235 196 A9 9 0 0 0 1235 214" fill="none" stroke="#999"/>

<!-- 3D -->
<g clip-path="url(#slideclip)">
<use href="#dome"/>
<use href="#land"/>
<text transform="translate(781 394) rotate(180)" style="font-size:8.500px;fill:#444" textLength="16">SW</text>
<text transform="translate(541 560) rotate(-90)" style="font-size:8.500px;fill:#444">SE</text>
<text transform="translate(1014 541) rotate(90)" style="font-size:8.500px;fill:#444">NW</text>
<text transform="translate(789 700) rotate(180)" style="font-size:8.500px;fill:#444" textLength="16">NE</text>
<text transform="translate(948 663) rotate(-145)" style="font-size:9px;fill:#333">N</text>
<text transform="translate(606 442) rotate(-135)" style="font-size:8px;fill:#444">S</text>
<text transform="translate(613 656) rotate(140)" style="font-size:8px;fill:#444">E</text>
<text transform="translate(942 442) rotate(40)" style="font-size:8px;fill:#444">W</text>
<text class="c" transform="translate(549 510) rotate(-75)">152</text>
<text class="c" transform="translate(569 480) rotate(-60)">165</text>
<text class="c" transform="translate(1009 484) rotate(65)">292</text>
<text class="c" transform="translate(1010 588) rotate(105)">322</text>
<text class="c" transform="translate(990 625) rotate(125)">345</text>
<text class="c" transform="translate(575 630) rotate(-125)">105</text>
<text class="c" transform="translate(552 595) rotate(-100)">123</text>
<text class="c" transform="translate(665 685) rotate(155)">75</text>
<text class="c" transform="translate(725 697) rotate(170)">60</text>
<text class="c" transform="translate(848 696) rotate(185)">30</text>
<text class="c" transform="translate(903 680) rotate(200)">15</text>
<text class="c" transform="translate(970 478) rotate(40)">285</text>
<path d="M950 653 L946 658 L953 660Z" fill="#222"/>
</g>

<!-- FECHA panel -->
<g clip-path="url(#panelclip)">
<rect x="1119" y="229" width="130" height="267" rx="6" fill="#fff" stroke="#ececec"/>
<text x="1131" y="246" style="fill:#666" textLength="87">FECHA Y HORA</text>
<text x="1150" y="281" style="fill:#666" textLength="68">Fechas útiles</text><path d="M1222 278 H1227 L1224.500 281Z" fill="#333"/>
<text x="1131" y="315" style="fill:#444" textLength="68">Día del Año</text>
<path d="M1151 333 L1146 337 L1151 341 M1185 333 L1180 337 L1185 341 M1151 427 L1146 431 L1151 435 M1185 427 L1180 431 L1185 435" fill="none" stroke="#222" stroke-width="1.700"/>
<text x="1217" y="342" style="fill:#aaa">21</text>
<text x="1200" y="390" style="fill:#aaa;font-size:10px" textLength="36">Día orci</text>
<text x="1131" y="408" style="fill:#444" textLength="71">Hora del día</text>
<text x="1157" y="485" style="fill:#aaa;font-size:10px" textLength="77">Salida del sol: 06</text>
</g>

<!-- slide scrollbars -->
<rect x="1236" y="156" width="15" height="686" fill="#e0e0e0"/>
<rect x="1236.500" y="157" width="14" height="18" fill="#fbfbfb" stroke="#ccc"/><path d="M1240 168 H1247 L1243.500 164Z" fill="#222"/>
<rect x="1236.500" y="697.500" width="14" height="50" fill="#fff" stroke="#bbb"/>
<rect x="1236.500" y="769" width="14" height="14" fill="#f8f8f8" stroke="#ccc"/><path d="M1240 774 H1247 L1243.500 778Z" fill="#222"/>
<path d="M1240 793 H1247 L1243.500 789Z M1240 798 H1247 L1243.500 794Z M1240 806 H1247 L1243.500 810Z M1240 811 H1247 L1243.500 815Z" fill="#222"/>
<rect x="257" y="820" width="978" height="17" fill="#d9d9d9"/>
<rect x="259" y="821" width="14" height="15" fill="#f6f6f6" stroke="#ccc"/><path d="M268 825 V832 L264 828.500Z" fill="#222"/>
<rect x="393.500" y="820.500" width="703" height="15" fill="#fff" stroke="#aaa"/>
<rect x="1218" y="821" width="14" height="15" fill="#f6f6f6" stroke="#ccc"/><path d="M1223 825 V832 L1227 828.500Z" fill="#222"/>

<!-- format pane -->
<rect x="1252" y="156" width="284" height="686" fill="#ececec"/>
<rect x="1252" y="156" width="1" height="686" fill="#d5d5d5"/>
<text x="1263" y="187" style="font-size:21px;fill:#7e1a10" textLength="184">Formato de imagen</text>
<path d="M1467 175 H1478 L1472.500 180Z" fill="#222"/>
<path d="M1508.500 172.500 L1518 182 M1518 172.500 L1508.500 182" stroke="#111" stroke-width="1.700"/>
<path d="M1270 214 L1279 205 L1288 214 L1279 225Z" fill="#fff" stroke="#222" stroke-width="1.400"/><path d="M1276 204 V212" stroke="#222" stroke-width="1.300"/><path d="M1286 213 Q1291 216 1290 224 L1287 220" fill="#222"/>
<path d="M1315 205 L1325 213 L1321 225 H1309 L1305 213Z" fill="none" stroke="#c92f1a" stroke-width="1.800"/><rect x="1309" y="226" width="12" height="1.800" fill="#e8b8a8"/>
<path d="M1341 210 H1345 M1343 210 V226 M1341 226 H1345" stroke="#444" fill="none"/><path d="M1346 204 H1364" stroke="#555"/><rect x="1346" y="207" width="19" height="19" fill="#111"/><path d="M1355.500 210 V223 M1349 216.500 H1362" stroke="#fff"/>
<rect x="1380" y="205" width="19" height="20" fill="#f4f4f4" stroke="#222" stroke-width="1.300"/><circle cx="1394" cy="210" r="1.600" fill="#222"/><path d="M1381 224 L1388 214 L1392 220 L1395 217 L1399 224Z" fill="#222"/>
<path d="M1263 241.500 H1308 L1315 234 L1322 241.500 H1523" fill="none" stroke="#c4c4c4"/>

<rect x="1508" y="248" width="15" height="575" fill="#dcdcdc"/>
<rect x="1508.500" y="248.500" width="14" height="14" fill="#fbfbfb" stroke="#ddd"/><path d="M1512 257 H1519 L1515.500 253Z" fill="#111"/>
<rect x="1508.500" y="262.500" width="14" height="518" fill="#fff" stroke="#aaa"/>
<rect x="1508.500" y="808.500" width="14" height="14" fill="#fbfbfb" stroke="#ddd"/><path d="M1512 814 H1519 L1515.500 818Z" fill="#111"/>

<path d="M1270 260 L1278 252 V260Z" fill="#222"/><text x="1284" y="261" class="b" textLength="43">Sombra</text>
<path d="M1270 476 L1278 468 V476Z" fill="#222"/><text x="1284" y="477" class="b" textLength="39">Reflejo</text>
<path d="M1270 637 L1278 629 V637Z" fill="#222"/><text x="1284" y="638" class="b" textLength="57">Iluminado</text>

<g>
<text x="1284" y="286" class="p" textLength="83">P<tspan text-decoration="underline">r</tspan>eestablecidos</text>
<text x="1284" y="316" class="p" textLength="29"><tspan text-decoration="underline">C</tspan>olor</text>
<text x="1284" y="344" class="p" textLength="73">T<tspan text-decoration="underline">r</tspan>ansparencia</text>
<text x="1284" y="369" class="p" textLength="41">Tamañ<tspan text-decoration="underline">o</tspan></text>
<text x="1284" y="395" class="p" textLength="64">De<tspan text-decoration="underline">s</tspan>enfoque</text>
<text x="1284" y="420" class="p" textLength="38">Á<tspan text-decoration="underline">n</tspan>gulo</text>
<text x="1284" y="446" class="p" textLength="48"><tspan text-decoration="underline">D</tspan>istancia</text>
<text x="1284" y="502" class="p" textLength="83">P<tspan text-decoration="underline">r</tspan>eestablecidos</text>
<text x="1284" y="530" class="p" textLength="73">T<tspan text-decoration="underline">r</tspan>ansparencia</text>
<text x="1284" y="556" class="p" textLength="41">Tamañ<tspan text-decoration="underline">o</tspan></text>
<text x="1284" y="581" class="p" textLength="64">De<tspan text-decoration="underline">s</tspan>enfoque</text>
<text x="1284" y="607" class="p" textLength="48"><tspan text-decoration="underline">D</tspan>istancia</text>
<text x="1284" y="663" class="p" textLength="83">P<tspan text-decoration="underline">r</tspan>eestablecidos</text>
<text x="1284" y="693" class="p" textLength="29"><tspan text-decoration="underline">C</tspan>olor</text>
<text x="1284" y="721" class="p" textLength="41">Tamañ<tspan text-decoration="underline">o</tspan></text>
<text x="1284" y="746" class="p" textLength="73">T<tspan text-decoration="underline">r</tspan>ansparencia</text>
</g>

<defs>
<g id="btn1"><rect x="1464.500" y="0.500" width="40" height="25" fill="#f3f3f3" stroke="#b4b4b4"/><rect x="1473" y="6" width="12" height="12" rx="1.500" fill="#fff" stroke="#222" stroke-width="1.100"/><path d="M1493 10 H1501 L1497 14Z" fill="#222"/></g>
<g id="btn2"><rect x="1464.500" y="0.500" width="40" height="25" fill="#f3f3f3" stroke="#b4b4b4"/><path d="M1475 9 L1480 4 L1485 9 L1480 15Z" fill="#fff" stroke="#333"/><path d="M1485 8 Q1489 9 1488 14" stroke="#1a4c9a" stroke-width="1.500" fill="none"/><rect x="1472" y="17" width="16" height="4" fill="#fff" stroke="#aaa"/><path d="M1493 10 H1501 L1497 14Z" fill="#222"/></g>
<g id="sp"><rect x="1365" y="-6" width="3" height="11" fill="#111"/><path d="M1368 -0.500 H1427" stroke="#888"/><rect x="1432.500" y="-10.500" width="72" height="20" fill="#fff" stroke="#b4b4b4"/><path d="M1494 -5 H1499 L1496.500 -8Z M1494 4 H1499 L1496.500 7Z" fill="#222"/></g>
</defs>
<use href="#btn1" y="268"/><use href="#btn2" y="298"/>
<use href="#sp" y="339"/><use href="#sp" y="364"/><use href="#sp" y="390"/><use href="#sp" y="415"/><use href="#sp" y="441"/>
<use href="#btn1" y="485"/>
<use href="#sp" y="525"/><use href="#sp" y="551"/><use href="#sp" y="576"/><use href="#sp" y="602"/>
<use href="#btn1" y="646"/><use href="#btn2" y="675"/>
<use href="#sp" y="716"/><use href="#sp" y="741"/>

<path d="M1271 768 L1277 772 L1271 776Z M1271 792 L1277 796 L1271 800Z M1271 816 L1277 820 L1271 824Z" fill="#fff" stroke="#666" stroke-width=".8"/>
<text x="1284" y="777" class="bk" textLength="80">Bordes suaves</text>
<text x="1284" y="801" class="bk" textLength="67">Formato 3D</text>
<text x="1284" y="825" class="bk" textLength="43">Giro 3D</text>

<!-- status bar -->
<rect x="62" y="841" width="1474" height="23" fill="#efefef"/>
<rect x="62" y="841" width="1474" height="1" fill="#d6d6d6"/>
<text x="69" y="856" class="st" textLength="84">Diapositiva 9 de 9</text>
<path d="M170 847 H180 V855 M170 847 V857 H178 M176 853 L178 856 L183 848" fill="none" stroke="#444"/>
<text x="197" y="856" class="st" textLength="67">Español (Perú)</text>
<path d="M1057 853 H1067 M1057 855.500 H1067 M1057 850.500 L1062 847 L1067 850.500Z" fill="#333" stroke="#333" stroke-width=".6"/>
<text x="1072" y="856" class="st" textLength="28">Notas</text>
<path d="M1117 847 H1131 V856 H1124 L1120 860 V856 H1117Z" fill="#222"/>
<text x="1133" y="856" class="st" textLength="60">Comentarios</text>
<rect x="1210" y="842" width="33" height="22" fill="#c8c8c8"/>
<path d="M1219.500 847.500 H1233.500 V859.500 H1219.500Z M1222.500 850.500 H1230.500 V854.500 H1222.500Z M1222 856.500 H1231" fill="none" stroke="#444"/>
<path d="M1253 847 H1258 V852 H1253Z M1260 847 H1265 V852 H1260Z M1253 854 H1258 V859 H1253Z M1260 854 H1265 V859 H1260Z" fill="none" stroke="#444"/>
<path d="M1287 848 H1293 V858 H1287Z M1293 848 H1299 V858 H1293Z M1289 851 H1291 M1295 851 H1297 M1289 854 H1291 M1295 854 H1297" fill="none" stroke="#444"/>
<path d="M1321 847 H1333 M1322 848 V854 H1332 V848 M1327 854 V859 M1324 860 H1330" fill="none" stroke="#444"/>
<rect x="1348" y="851" width="8" height="2" fill="#333"/>
<path d="M1359 852.500 H1458" stroke="#888"/><rect x="1407" y="846" width="4.500" height="12" fill="#222"/>
<path d="M1462 852.500 H1470 M1466 848.500 V856.500" stroke="#222" stroke-width="1.800"/>
<text x="1481" y="856" class="st" textLength="24">100%</text>
<path d="M1519 851 V846 H1524 M1527 846 H1532 V851 M1532 854 V859 H1527 M1524 859 H1519 V854" fill="none" stroke="#444" stroke-width="1.200"/>
<rect x="1522" y="849" width="7" height="7" fill="none" stroke="#888" stroke-width=".6"/>
</svg>
</body></html>
